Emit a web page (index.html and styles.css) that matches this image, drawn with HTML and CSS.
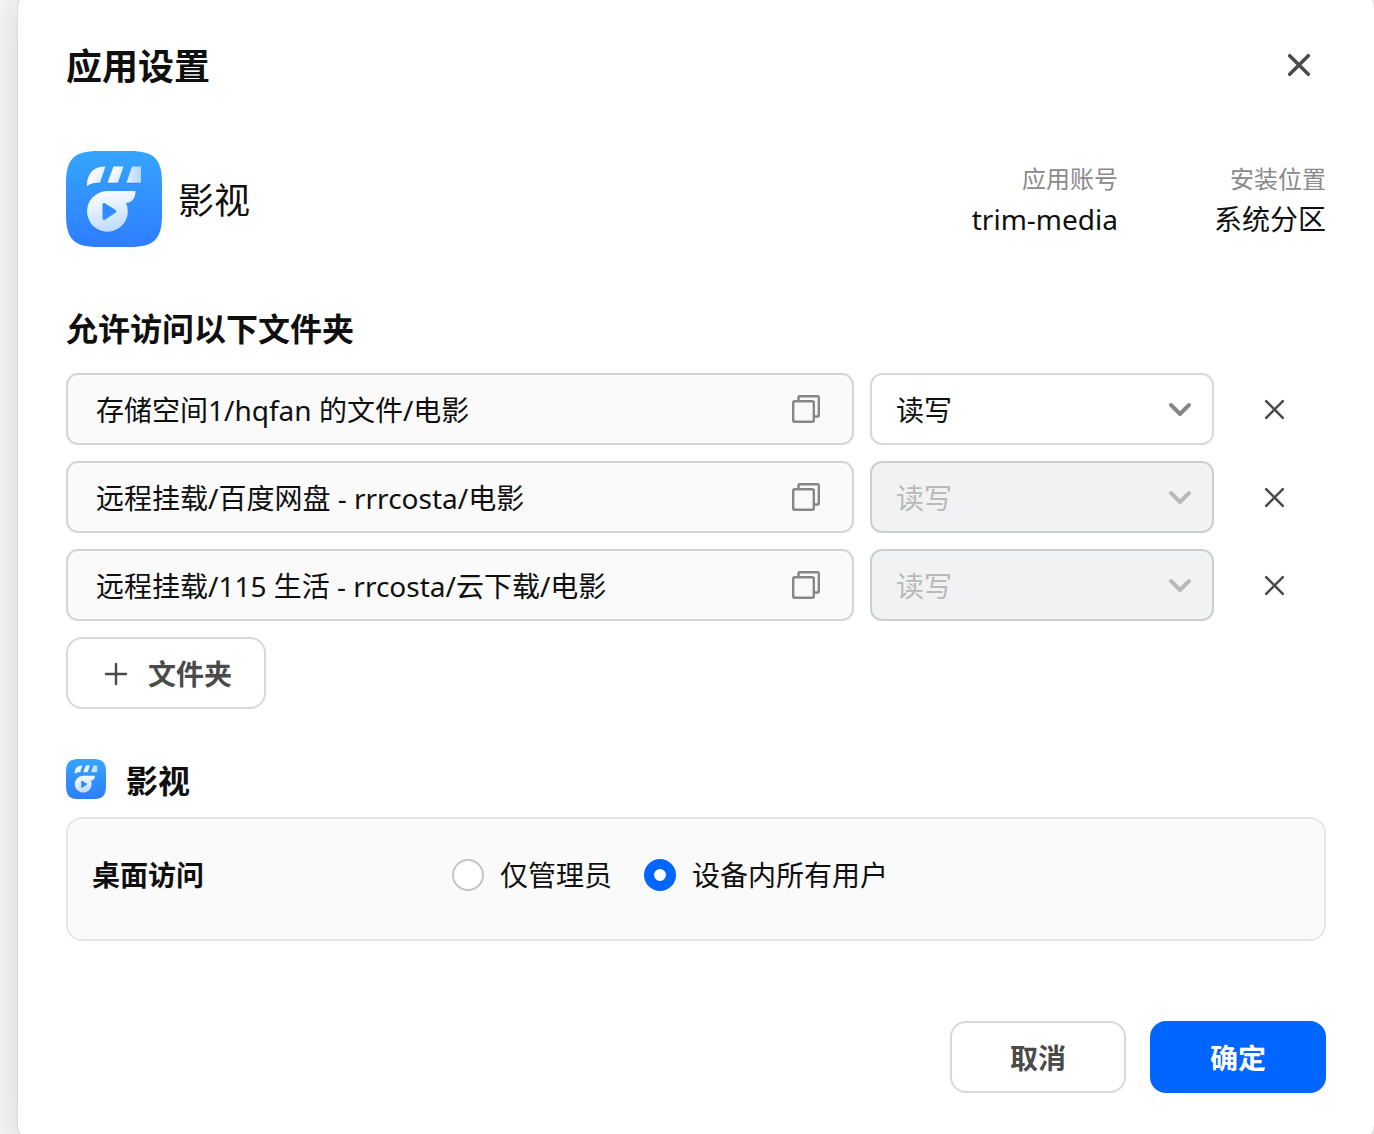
FILE: index.html
```html
<!DOCTYPE html>
<html lang="zh-CN">
<head>
    <meta charset="UTF-8">
    <meta name="viewport" content="width=device-width, initial-scale=1.0">
    <title>应用设置</title>
    <link rel="stylesheet" href="styles.css">
</head>
<body>

    <!-- 图标 -->
    <svg class="icon-defs" aria-hidden="true">
        <defs>
            <linearGradient id="logo-bg" x1="0" y1="0" x2="0" y2="1">
                <stop offset="0" stop-color="#35a5fe"/>
                <stop offset="1" stop-color="#2e7dfe"/>
            </linearGradient>
            <linearGradient id="logo-clap" x1="0" y1="0" x2="1" y2="0.6">
                <stop offset="0.3" stop-color="#ffffff"/>
                <stop offset="1" stop-color="#d5e9ff"/>
            </linearGradient>
            <linearGradient id="logo-clap-end" x1="0" y1="0" x2="1" y2="0">
                <stop offset="0" stop-color="#e3f0ff"/>
                <stop offset="1" stop-color="#b2d6ff"/>
            </linearGradient>
            <linearGradient id="logo-body" x1="0.2" y1="0" x2="0.5" y2="1">
                <stop offset="0" stop-color="#ffffff"/>
                <stop offset="1" stop-color="#bddaff"/>
            </linearGradient>
        </defs>
        <symbol id="logo" viewBox="0 0 96 96">
            <path fill="url(#logo-bg)" d="M0 32C0 8 8 0 32 0H64C88 0 96 8 96 32V64C96 88 88 96 64 96H32C8 96 0 88 0 64Z"/>
            <g fill="#1766dd" opacity="0.25" transform="translate(0 1)">
                <path d="M21 35.500C20.500 24 27 15.500 38 15.500H39.500L34 31.700C27 31.700 23 33 21 35.500Z"/>
                <path d="M47.500 15.500H57.500L52 31.700H41.500ZM66 15.500H75V31.700H60.500Z"/>
                <path d="M41.300 40H69.500C69.500 47 66.500 51.500 60 52A20.400 20.400 0 1 1 41.300 40Z"/>
            </g>
            <path fill="url(#logo-clap)" d="M21 35.500C20.500 24 27 15.500 38 15.500H39.500L34 31.700C27 31.700 23 33 21 35.500Z"/>
            <path fill="url(#logo-clap)" d="M47.500 15.500H57.500L52 31.700H41.500Z"/>
            <path fill="url(#logo-clap-end)" d="M66 15.500H75V31.700H60.500Z"/>
            <path fill="url(#logo-body)" d="M41.300 40H69.500C69.500 47 66.500 51.500 60 52A20.400 20.400 0 1 1 41.300 40Z"/>
            <path fill="#2f8bfe" stroke="#2f8bfe" stroke-width="3" stroke-linejoin="round" d="M38 53.500L48.800 60.300L38 67.500Z"/>
        </symbol>
        <symbol id="copy" viewBox="0 0 28 28">
            <g fill="none" stroke="#868686" stroke-width="2.400" stroke-linejoin="round">
                <rect x="1.200" y="6.200" width="20.600" height="20.600" rx="1.500"/>
                <path d="M6.500 6V2.200Q6.500 1.200 7.500 1.200H25.800Q26.800 1.200 26.800 2.200V20.500Q26.800 21.500 25.800 21.500H22"/>
            </g>
        </symbol>
        <symbol id="cross" viewBox="0 0 24 24">
            <path d="M4 4L20 20M20 4L4 20" fill="none" stroke="currentColor" stroke-linecap="round"/>
        </symbol>
        <symbol id="chevron" viewBox="0 0 24 24">
            <path d="M3 8L12 17L21 8" fill="none" stroke="currentColor" stroke-width="4" stroke-linecap="round" stroke-linejoin="round"/>
        </symbol>
    </svg>

    <div class="dialog" role="dialog" aria-labelledby="dialog-title">
        <div class="dialog-header">
            <h1 id="dialog-title">应用设置</h1>
            <button class="close-btn" type="button" aria-label="关闭">
                <svg><use href="#cross"/></svg>
            </button>
        </div>

        <!-- 应用信息 -->
        <div class="app-info">
            <svg class="app-logo"><use href="#logo"/></svg>
            <span class="app-name">影视</span>
            <dl class="app-meta">
                <div>
                    <dt>应用账号</dt>
                    <dd>trim-media</dd>
                </div>
                <div>
                    <dt>安装位置</dt>
                    <dd>系统分区</dd>
                </div>
            </dl>
        </div>

        <!-- 文件夹权限 -->
        <h2>允许访问以下文件夹</h2>
        <div class="folder-list">
            <div class="folder-row">
                <div class="path-box">
                    <input type="text" value="存储空间1/hqfan 的文件/电影" aria-label="文件夹路径" readonly>
                    <button class="copy-btn" type="button" aria-label="复制"><svg><use href="#copy"/></svg></button>
                </div>
                <div class="select-box">
                    <select aria-label="权限">
                        <option>读写</option>
                        <option>只读</option>
                    </select>
                    <svg><use href="#chevron"/></svg>
                </div>
                <button class="remove-btn" type="button" aria-label="移除"><svg><use href="#cross"/></svg></button>
            </div>
            <div class="folder-row">
                <div class="path-box">
                    <input type="text" value="远程挂载/百度网盘 - rrrcosta/电影" aria-label="文件夹路径" readonly>
                    <button class="copy-btn" type="button" aria-label="复制"><svg><use href="#copy"/></svg></button>
                </div>
                <div class="select-box disabled">
                    <select aria-label="权限" disabled>
                        <option>读写</option>
                    </select>
                    <svg><use href="#chevron"/></svg>
                </div>
                <button class="remove-btn" type="button" aria-label="移除"><svg><use href="#cross"/></svg></button>
            </div>
            <div class="folder-row">
                <div class="path-box">
                    <input type="text" value="远程挂载/115 生活 - rrcosta/云下载/电影" aria-label="文件夹路径" readonly>
                    <button class="copy-btn" type="button" aria-label="复制"><svg><use href="#copy"/></svg></button>
                </div>
                <div class="select-box disabled">
                    <select aria-label="权限" disabled>
                        <option>读写</option>
                    </select>
                    <svg><use href="#chevron"/></svg>
                </div>
                <button class="remove-btn" type="button" aria-label="移除"><svg><use href="#cross"/></svg></button>
            </div>
            <button class="btn add-btn" type="button">
                <svg viewBox="0 0 32 32"><path d="M16 6V26M6 16H26" fill="none" stroke="currentColor" stroke-width="2.400" stroke-linecap="round"/></svg>
                文件夹
            </button>
        </div>

        <!-- 桌面访问 -->
        <div class="access-title">
            <svg><use href="#logo"/></svg>
            <h2>影视</h2>
        </div>
        <div class="access-panel" role="radiogroup" aria-labelledby="access-label">
            <span class="access-label" id="access-label">桌面访问</span>
            <label class="radio"><input type="radio" name="access">仅管理员</label>
            <label class="radio"><input type="radio" name="access" checked>设备内所有用户</label>
        </div>

        <div class="dialog-footer">
            <button class="btn" type="button">取消</button>
            <button class="btn primary" type="button">确定</button>
        </div>
    </div>

</body>
</html>
```

FILE: styles.css
```css
* {
    box-sizing: border-box;
}

body {
    margin: 0;
    padding-left: 18px;
    height: 100vh;
    overflow: hidden;
    background-color: #f3f5f4;
    font-family: "Noto Sans", "Noto Sans CJK SC", sans-serif;
    font-size: 28px;
    line-height: 40px;
    color: #0f0f0f;
}

h1, h2, dl, dd {
    margin: 0;
}

button, input, select {
    font: inherit;
    color: inherit;
}

button {
    padding: 0;
    border: none;
    background: none;
    cursor: pointer;
}

svg {
    display: block;
    flex: none;
}

.icon-defs {
    position: absolute;
    width: 0;
    height: 0;
}

/* 弹窗 */
.dialog {
    margin-top: -8px;
    min-height: calc(100vh + 13px);
    padding: 48px;
    display: flex;
    flex-direction: column;
    background-color: #fff;
    border-radius: 16px;
    box-shadow: 0 0 2px rgba(0, 0, 0, 0.2), 0 8px 40px rgba(0, 0, 0, 0.12);
}

.dialog-header {
    display: flex;
    justify-content: space-between;
    height: 52px;
}

.dialog-header h1 {
    padding-top: 2px;
    font-size: 36px;
    line-height: 50px;
}

.close-btn {
    display: flex;
    align-items: center;
    justify-content: center;
    width: 54px;
    height: 50px;
    color: #4a4a4a;
}

.close-btn svg {
    width: 28px;
    height: 28px;
    stroke-width: 3px;
}

/* 应用信息 */
.app-info {
    display: flex;
    align-items: center;
    gap: 16px;
    margin-top: 59px;
}

.app-logo {
    width: 96px;
    height: 96px;
}

.app-name {
    padding-top: 4px;
    font-size: 36px;
}

.app-meta {
    display: flex;
    gap: 96px;
    margin-left: auto;
    text-align: right;
}

.app-meta dt {
    font-size: 24px;
    color: #8a8a8a;
}

h2 {
    font-size: 32px;
    line-height: 40px;
}

.app-info + h2 {
    margin-top: 62px;
}

/* 文件夹列表 */
.folder-list {
    display: flex;
    flex-direction: column;
    align-items: flex-start;
    gap: 16px;
    margin-top: 24px;
}

.folder-row {
    display: flex;
    align-items: center;
    width: 100%;
    height: 72px;
}

.path-box {
    flex: 1;
    display: flex;
    align-items: center;
    height: 100%;
    margin-right: 16px;
    padding: 0 32px 0 28px;
    background-color: #fafafa;
    border: 2px solid #d4d4d4;
    border-radius: 12px;
}

.path-box input {
    flex: 1;
    min-width: 0;
    padding: 2px 0 0;
    border: none;
    outline: none;
    background: none;
}

.copy-btn svg {
    width: 28px;
    height: 28px;
}

.select-box {
    position: relative;
    width: 344px;
    height: 100%;
    color: #0f0f0f;
}

.select-box select {
    appearance: none;
    width: 100%;
    height: 100%;
    padding: 2px 24px 0;
    background-color: #fff;
    border: 2px solid #d8d8d8;
    border-radius: 12px;
    opacity: 1;
}

.select-box svg {
    position: absolute;
    top: 24px;
    right: 22px;
    width: 24px;
    height: 24px;
    color: #868686;
    pointer-events: none;
}

.select-box.disabled select {
    background-color: #f1f2f4;
    border-color: #cdced0;
    color: #b8b9bb;
}

.select-box.disabled svg {
    color: #b8b9bb;
}

.remove-btn {
    display: flex;
    align-items: center;
    justify-content: center;
    width: 72px;
    height: 72px;
    margin: 0 16px 0 24px;
    color: #4a4a4a;
}

.remove-btn svg {
    width: 25px;
    height: 25px;
    stroke-width: 2.4;
}

/* 按钮 */
.btn {
    display: flex;
    align-items: center;
    justify-content: center;
    gap: 16px;
    width: 176px;
    height: 72px;
    padding-top: 2px;
    background-color: #fff;
    border: 2px solid #d8d8d8;
    border-radius: 16px;
    font-weight: bold;
    color: #4a4a4a;
}

.btn.primary {
    background-color: #06f;
    border-color: #06f;
    color: #fff;
}

.add-btn {
    width: 200px;
}

.add-btn svg {
    width: 32px;
    height: 32px;
}

/* 桌面访问 */
.access-title {
    display: flex;
    align-items: center;
    gap: 20px;
    height: 40px;
    margin-top: 50px;
}

.access-title svg {
    width: 40px;
    height: 40px;
}

.access-title h2 {
    padding-top: 4px;
}

.access-panel {
    display: flex;
    align-items: center;
    gap: 32px;
    height: 124px;
    margin-top: 18px;
    padding: 0 24px 8px;
    background-color: #fafafa;
    border: 2px solid #e6e6e6;
    border-radius: 16px;
}

.access-label {
    width: 328px;
    font-weight: bold;
}

.radio {
    display: flex;
    align-items: center;
    gap: 16px;
}

.radio input {
    appearance: none;
    width: 32px;
    height: 32px;
    margin: 0;
    background-color: #fff;
    border: 2px solid #c4c4c4;
    border-radius: 50%;
}

.radio input:checked {
    border: 10px solid #06f;
}

.dialog-footer {
    display: flex;
    justify-content: flex-end;
    gap: 24px;
    margin-top: 80px;
}
```
